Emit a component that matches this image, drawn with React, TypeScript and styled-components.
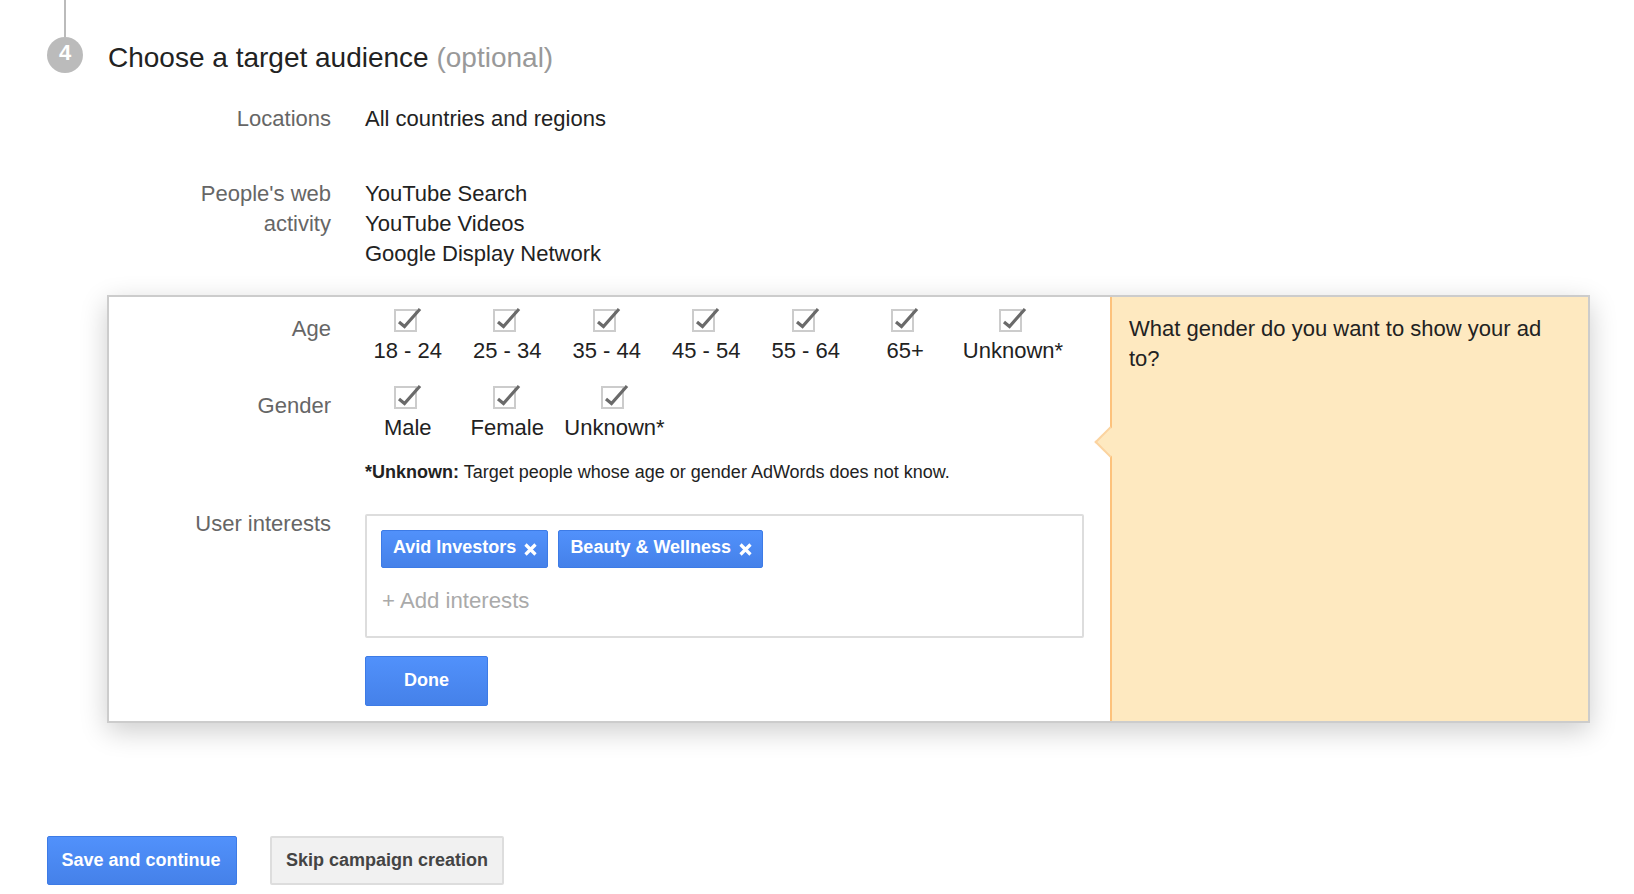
import { createGlobalStyle } from "styled-components";
import styled from "styled-components";

const GlobalStyle = createGlobalStyle`
  html, body {
    margin: 0;
    padding: 0;
    background: #fff;
    overflow: hidden;
  }
  body {
    font-family: "Liberation Sans", Arial, sans-serif;
    color: #222;
  }
`;

const Page = styled.div`
  width: 1634px;
  height: 894px;
  box-sizing: border-box;
  padding-left: 47px;
`;

const Connector = styled.div`
  width: 2px;
  height: 37px;
  margin-left: 17px;
  background: #bbb;
`;

const StepHeader = styled.div`
  display: flex;
  align-items: center;
  gap: 25px;
  height: 36px;
`;

const StepBadge = styled.div`
  width: 36px;
  height: 36px;
  border-radius: 50%;
  background: #bbb;
  color: #fff;
  font-size: 22px;
  font-weight: 700;
  line-height: 32px;
  text-align: center;
`;

const Heading = styled.h2`
  margin: 6px 0 0;
  font-size: 28px;
  font-weight: 400;
  line-height: 36px;
  color: #222;
`;

const Optional = styled.span`
  color: #999;
`;

const Summary = styled.div`
  margin: 31px 0 0 61px;
  display: flex;
  flex-direction: column;
  gap: 45px;
`;

const SummaryRow = styled.div`
  display: flex;
  gap: 34px;
  font-size: 22px;
  line-height: 30px;
`;

const RowLabel = styled.div<{ $width: number; $offset?: number }>`
  width: ${({ $width }) => $width}px;
  flex-shrink: 0;
  margin-top: ${({ $offset }) => $offset ?? 0}px;
  text-align: right;
  color: #666;
  font-size: 22px;
  line-height: 30px;
`;

const Card = styled.div`
  margin: 26px 0 0 60px;
  width: 1483px;
  height: 428px;
  box-sizing: border-box;
  display: flex;
  background: #fff;
  border: 2px solid #ccc;
  box-shadow: 0 8px 26px rgba(0, 0, 0, 0.2);
`;

const Form = styled.div`
  flex: 1;
  box-sizing: border-box;
  padding-top: 10px;
  display: flex;
  flex-direction: column;
`;

const FormRow = styled.div<{ $gap?: number }>`
  display: flex;
  gap: 34px;
  margin-top: ${({ $gap }) => $gap ?? 0}px;
`;

const Options = styled.div`
  display: flex;
  margin-left: -7px;
`;

const Option = styled.label<{ $width: number }>`
  width: ${({ $width }) => $width}px;
  display: flex;
  flex-direction: column;
  align-items: center;
  gap: 2px;
  font-size: 22px;
  line-height: 30px;
  color: #222;

  svg {
    margin-right: 1px;
  }
`;

const Footnote = styled.p`
  margin: 14px 0 0 256px;
  font-size: 18px;
  line-height: 30px;
  color: #222;
`;

const InterestsBox = styled.div`
  width: 719px;
  height: 124px;
  box-sizing: border-box;
  padding: 14px;
  border: 2px solid #ddd;
  border-radius: 2px;
`;

const Chips = styled.div`
  display: flex;
  gap: 10px;
`;

const Chip = styled.div`
  height: 38px;
  box-sizing: border-box;
  padding: 0 10px 4px 11px;
  display: flex;
  align-items: center;
  gap: 8px;
  border: 1px solid #3d7be6;
  border-radius: 2px;
  background: linear-gradient(#5191fb, #4581e9);
  color: #fff;
  font-size: 18px;
  font-weight: 700;

  svg {
    margin-top: 4px;
  }
`;

const AddInterests = styled.div`
  margin-top: 18px;
  margin-left: 1px;
  font-size: 22.2px;
  line-height: 30px;
  color: #aaa;
`;

const BlueButton = styled.button`
  box-sizing: border-box;
  border: 1px solid #3d7be6;
  border-radius: 2px;
  background: linear-gradient(#5191fb, #4581e9);
  color: #fff;
  font-family: inherit;
  font-size: 18px;
  font-weight: 700;
  padding: 0;
`;

const DoneButton = styled(BlueButton)`
  display: block;
  width: 123px;
  height: 50px;
  margin: 18px 0 0 256px;
  padding-bottom: 2px;
`;

const HelpPanel = styled.div`
  position: relative;
  width: 478px;
  flex-shrink: 0;
  box-sizing: border-box;
  padding: 17px 32px 0 17px;
  background: #fee9c0;
  border-left: 2px solid #fdc27c;
  font-size: 22px;
  line-height: 30px;
  color: #222;

  &::before {
    content: "";
    position: absolute;
    left: -13px;
    top: 134px;
    width: 22px;
    height: 22px;
    box-sizing: border-box;
    background: #fee9c0;
    border-left: 2px solid #fbd3a0;
    border-bottom: 2px solid #fbd3a0;
    transform: rotate(45deg);
  }
`;

const Actions = styled.div`
  margin-top: 113px;
  display: flex;
  gap: 33px;
`;

const SaveButton = styled(BlueButton)`
  width: 190px;
  height: 49px;
  padding-right: 2px;
`;

const SkipButton = styled.button`
  width: 234px;
  height: 49px;
  box-sizing: border-box;
  padding: 0;
  border: 2px solid #ddd;
  border-radius: 2px;
  background: #f1f1f1;
  color: #444;
  font-family: inherit;
  font-size: 18px;
  font-weight: 700;
`;

const CheckMark = () => (
  <svg width="29" height="27" viewBox="0 0 29 27">
    <rect x="2" y="3" width="21" height="21" fill="#fff" stroke="#ccc" strokeWidth="2" />
    <path d="M6 15 L11.5 19.5 L27 2" fill="none" stroke="#6a6a6a" strokeWidth="3.2" />
  </svg>
);

const CloseIcon = () => (
  <svg width="13" height="13" viewBox="0 0 13 13">
    <path d="M1.5 1.5 L11.5 11.5 M11.5 1.5 L1.5 11.5" stroke="#fff" strokeWidth="3.2" />
  </svg>
);

const ages = [
  { text: "18 - 24", width: 99.5 },
  { text: "25 - 34", width: 99.5 },
  { text: "35 - 44", width: 99.5 },
  { text: "45 - 54", width: 99.5 },
  { text: "55 - 64", width: 99.5 },
  { text: "65+", width: 99.5 },
  { text: "Unknown*", width: 116 },
];

const genders = [
  { text: "Male", width: 99.5 },
  { text: "Female", width: 99.5 },
  { text: "Unknown*", width: 115 },
];

const interests = ["Avid Investors", "Beauty & Wellness"];

const App = () => {
  return (
    <Page>
      <GlobalStyle />
      <Connector />
      <StepHeader>
        <StepBadge>4</StepBadge>
        <Heading>
          Choose a target audience <Optional>(optional)</Optional>
        </Heading>
      </StepHeader>

      <Summary>
        <SummaryRow>
          <RowLabel $width={223}>Locations</RowLabel>
          <div>All countries and regions</div>
        </SummaryRow>
        <SummaryRow>
          <RowLabel $width={223}>
            People's web
            <br />
            activity
          </RowLabel>
          <div>
            YouTube Search
            <br />
            YouTube Videos
            <br />
            Google Display Network
          </div>
        </SummaryRow>
      </Summary>

      <Card>
        <Form>
          <FormRow>
            <RowLabel $width={222} $offset={7}>
              Age
            </RowLabel>
            <Options>
              {ages.map((age) => (
                <Option $width={age.width} key={age.text}>
                  <CheckMark />
                  {age.text}
                </Option>
              ))}
            </Options>
          </FormRow>
          <FormRow $gap={18}>
            <RowLabel $width={222} $offset={7}>
              Gender
            </RowLabel>
            <Options>
              {genders.map((gender) => (
                <Option $width={gender.width} key={gender.text}>
                  <CheckMark />
                  {gender.text}
                </Option>
              ))}
            </Options>
          </FormRow>
          <Footnote>
            <b>*Unknown:</b> Target people whose age or gender AdWords does not know.
          </Footnote>
          <FormRow $gap={27}>
            <RowLabel $width={222} $offset={-5}>
              User interests
            </RowLabel>
            <InterestsBox>
              <Chips>
                {interests.map((interest) => (
                  <Chip key={interest}>
                    {interest}
                    <CloseIcon />
                  </Chip>
                ))}
              </Chips>
              <AddInterests>+ Add interests</AddInterests>
            </InterestsBox>
          </FormRow>
          <DoneButton>Done</DoneButton>
        </Form>
        <HelpPanel>What gender do you want to show your ad to?</HelpPanel>
      </Card>

      <Actions>
        <SaveButton>Save and continue</SaveButton>
        <SkipButton>Skip campaign creation</SkipButton>
      </Actions>
    </Page>
  );
};

export default App;
